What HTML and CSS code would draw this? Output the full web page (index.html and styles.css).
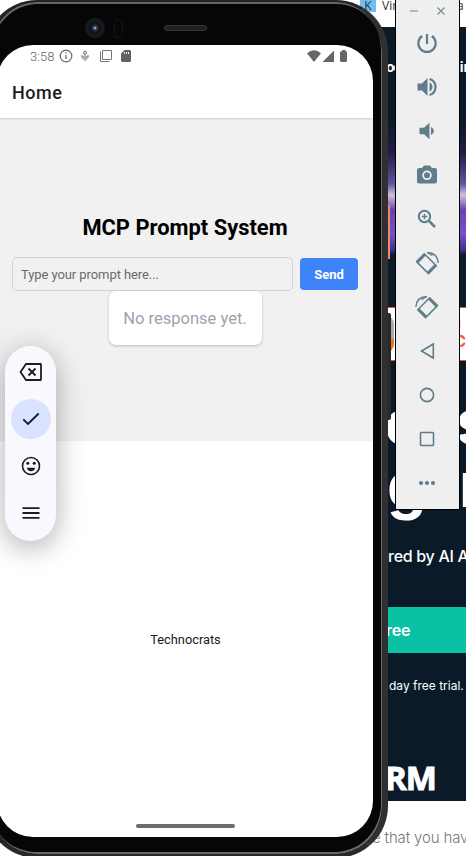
FILE: index.html
```html
<!DOCTYPE html>
<html lang="en">
<head>
<meta charset="utf-8">
<title>MCP Prompt System</title>
<link rel="stylesheet" href="styles.css">
</head>
<body>
<main class="desktop">
  <section class="site">
    <div class="tabs"><span class="favicon">K</span><span>Vir</span><span class="tab-end">a</span></div>
    <div class="nav"><b>oc</b><b>in</b></div>
    <div class="art"><i></i></div>
    <div class="banner"><span class="avatar"></span><span class="banner-text"><small>H</small><b>C</b></span></div>
    <div class="headline"><div><span>o</span><span>s</span></div><div><span>g</span><span>r</span></div></div>
    <p class="powered">ered by AI Agents</p>
    <div class="cta">Free</div>
    <p class="trial">day free trial. <span>N</span></p>
    <div class="brand">RM</div>
    <p class="foot">e that you have</p>
  </section>

  <div class="side-key"></div>
  <section class="phone">
    <div class="bezel"><span class="camera"></span><span class="sensor"></span><span class="speaker"></span></div>
    <div class="screen">
      <div class="status">
        <span class="time">3:58</span>
        <svg class="s-info" width="14" height="14" viewBox="0 0 14 14" fill="none" stroke="#666"><circle cx="7" cy="7" r="5.8" stroke-width="1.2"/><path d="M7 6v4M7 3.5v1.3" stroke-width="1.3"/></svg>
        <svg class="s-pin" width="10" height="12" viewBox="0 0 10 12" fill="none" stroke="#666"><circle cx="5" cy="2.800" r="1.500"/><path d="M5 4.500v3M2 5.500l3 3 3-3M2 5.500v2l3 3 3-3v-2" stroke-width="1"/></svg>
        <svg class="s-copy" width="13" height="13" viewBox="0 0 13 13" fill="none" stroke="#777"><path d="M3.500 1.500h9v9h-9zM1.500 2.500v10h9"/></svg>
        <svg class="s-sd" width="10" height="12" viewBox="0 0 10 12"><path d="M3.5 0H9l1 1v10l-1 1H1l-1-1V3.5z" fill="#616161"/><path d="M3.5 2v2M5.5 2v2M7.5 2v2" stroke="#fff" stroke-width=".9"/></svg>
        <svg class="s-net" width="42" height="12" viewBox="0 0 42 12" fill="#666"><path d="M0 3.2Q7-2.6 14 3.2L7 12zM15.5 12 27 .5V12z"/><path d="M33 1.500h2V0h3.500v1.500H40V11l-1 1h-5l-1-1z"/></svg>
      </div>
      <header class="appbar">Home</header>
      <section class="prompt">
        <h1>MCP Prompt System</h1>
        <div class="form"><div class="field">Type your prompt here...</div><button>Send</button></div>
        <div class="response">No response yet.</div>
      </section>
      <footer class="credit">Technocrats</footer>
      <div class="home-bar"></div>
    </div>
  </section>

  <nav class="keys">
    <span><svg width="24" height="20" viewBox="0 0 24 20" fill="none" stroke="currentColor" stroke-width="1.800" stroke-linejoin="round"><path d="M7 2h14.500q.5 0 .5.500v15q0 .5-.5.500H7L1.500 10z"/><path d="m9.500 6.500 7 7m0-7-7 7"/></svg></span>
    <span class="active"><svg width="18" height="14" viewBox="0 0 18 14" fill="none" stroke="currentColor" stroke-width="1.800"><path d="m1.300 7.300 4.700 4.700L16.700 1.500"/></svg></span>
    <span><svg width="20" height="20" viewBox="0 0 20 20" fill="currentColor"><circle cx="10" cy="10" r="8.500" fill="none" stroke="currentColor" stroke-width="1.600"/><circle cx="6.800" cy="7.300" r="1.500"/><circle cx="13.200" cy="7.300" r="1.500"/><path d="M5.800 11.800h8.400a4.300 4.300 0 0 1-8.400 0z"/></svg></span>
    <span><svg width="18" height="12" viewBox="0 0 18 12" stroke="currentColor" stroke-width="1.800"><path d="M.5 1.200h17M.5 6h17M.5 10.800h17"/></svg></span>
  </nav>

  <aside class="tools">
    <div class="window"><svg width="8" height="8" viewBox="0 0 8 8"><path d="M0 4h8" stroke="#9aabb4" stroke-width="1.600"/></svg><svg width="8" height="8" viewBox="0 0 8 8"><path d="m.5.500 7 7m0-7-7 7" stroke="#78909c" stroke-width="1.300"/></svg></div>
    <span><svg viewBox="0 0 24 24" fill="none" stroke="currentColor" stroke-width="2.200"><path d="M12 3v10M7.200 5a8.700 8.700 0 1 0 9.600 0"/></svg></span>
    <span><svg viewBox="0 0 24 24" fill="currentColor"><path d="M2.500 8.500v7H7l5.500 5.500V3L7 8.500zM14.500 7.500v9q3-1.300 3-4.500t-3-4.500z"/><path d="M14.500 4q6 1.700 6 8t-6 8" fill="none" stroke="currentColor" stroke-width="2.200"/></svg></span>
    <span><svg viewBox="0 0 24 24" fill="currentColor"><path d="M4.500 8.800v6.400H9l5.500 5V3.800l-5.500 5zM16 8v8q3-1.300 3-4t-3-4z"/></svg></span>
    <span><svg viewBox="0 0 24 24" fill="currentColor" fill-rule="evenodd"><path d="m9 2.500-2 2.500H4q-2 0-2 2v11.500q0 2 2 2h16q2 0 2-2V7q0-2-2-2h-3l-2-2.500zM12 7.500a4.800 4.800 0 1 1 0 9.600 4.800 4.800 0 0 1 0-9.600z"/><circle cx="12" cy="12.300" r="3"/></svg></span>
    <span><svg viewBox="0 0 24 24" fill="none" stroke="currentColor" stroke-width="2"><circle cx="9.500" cy="9.500" r="5.700"/><path d="M9.500 6.700v5.600M6.700 9.500h5.600" stroke-width="1.500"/><path d="m14 14 6 6" stroke-width="2.500"/></svg></span>
    <span><svg viewBox="0 0 24 24" fill="none" stroke="currentColor" stroke-width="1.500" stroke-linejoin="round"><path d="m9.300 2.800 12 12-7.800 7.800-12-12z"/><path d="m2.300 11.300 7.700-7.700M12.800 21.800l7.700-7.700" stroke-width="2.600"/><path d="M12 1.700q10-.5 11.200 10.100" stroke-width="1.400"/><path d="m13 1.700 4.500 3" stroke-width="1.300"/></svg></span>
    <span><svg class="flip" viewBox="0 0 24 24" fill="none" stroke="currentColor" stroke-width="1.500" stroke-linejoin="round"><path d="m9.300 2.800 12 12-7.800 7.800-12-12z"/><path d="m2.300 11.300 7.700-7.700M12.800 21.800l7.700-7.700" stroke-width="2.600"/><path d="M12 1.700q10-.5 11.200 10.100" stroke-width="1.400"/><path d="m13 1.700 4.500 3" stroke-width="1.300"/></svg></span>
    <span><svg viewBox="0 0 24 24" fill="none" stroke="currentColor" stroke-width="1.600"><path d="M18.300 5v14L6.500 12z"/></svg></span>
    <span><svg viewBox="0 0 24 24" fill="none" stroke="currentColor" stroke-width="1.600"><circle cx="12" cy="12" r="6.600"/></svg></span>
    <span><svg viewBox="0 0 24 24" fill="none" stroke="currentColor" stroke-width="1.600"><rect x="5.500" y="5.500" width="13" height="13" rx=".8"/></svg></span>
    <span><svg viewBox="0 0 24 24" fill="currentColor"><circle cx="6" cy="12" r="2.100"/><circle cx="12" cy="12" r="2.100"/><circle cx="18" cy="12" r="2.100"/></svg></span>
  </aside>
</main>
</body>
</html>
```
FILE: styles.css
```css
* { box-sizing: border-box; }
body { margin: 0; overflow: hidden; font-family: Roboto, sans-serif; }
h1, p { margin: 0; }
svg { display: block; flex: none; }
.desktop { position: relative; width: 466px; height: 856px; overflow: hidden; background: #fff; }

/* Browser window behind the phone */
.site { position: absolute; inset: 0; padding-left: 360px; background: #fff; font-family: Inter, sans-serif; color: #fff; white-space: nowrap; }
.tabs { display: flex; height: 27px; padding: 0; color: #303030; font: 12px/12px "Open Sans", sans-serif; }
.favicon { width: 16px; height: 12px; margin-right: 6px; background: #70bff1; text-align: center; }
.tab-end { margin-left: 60px; }
.nav { display: flex; height: 91px; gap: 57px; padding: 30px 0 0 26px; background: #0a1a28; font-size: 14px; line-height: 20px; }
.nav b:first-child { letter-spacing: -1px; margin-right: 2px; }
.art { height: 190px; padding: 87px 0 0 28px; background: linear-gradient(#0a1a28, #201d47 35px, #61559e 66px, #d1c1d9 77px, #6941ad 92px, #7950ca 116px, #402f8d 132px, #0b1b2c 137px); }
.art i { display: block; width: 2px; height: 54px; background: #f1886e; }
.banner { display: flex; align-items: center; gap: 60px; height: 54px; margin-top: -1px; padding-left: 18px; background: #fff; border: solid #ed5051; border-width: 1px 0; }
.avatar { width: 20px; height: 36px; border-radius: 10px; background: linear-gradient(#aaa 65%, #e77819 65%); }
.banner-text small, .banner-text b { display: block; font-size: 9px; line-height: 14px; color: #ed5789; }
.banner-text b { font-size: 16px; line-height: 21px; color: #f15a43; }
.headline { height: 173px; padding-top: 29px; background: #0a1a28; font-size: 62px; line-height: 63px; font-weight: 700; }
.headline div { display: grid; grid-template-columns: 72px 60px; padding-left: 24px; }
.headline div:last-child { padding-left: 27px; }
.powered { height: 73px; padding: 10px 0 0 19px; background: #0a1a28; font-size: 16px; line-height: 24px; font-weight: 500; letter-spacing: -.3px; }
.cta { height: 46px; padding-left: 17px; background: #0bc1a4; font-size: 16px; line-height: 46px; font-weight: 600; letter-spacing: -.2px; }
.trial { height: 92px; padding: 22px 0 0 29px; background: #0a1a28; font-size: 12px; line-height: 22px; }
.trial span { color: #3232bd; }
.brand { height: 56px; padding-left: 25px; background: #0a1a28; font: 700 33px/66px "Open Sans", sans-serif; letter-spacing: -1px; -webkit-text-stroke: 1px #fff; }
.foot { padding: 24px 0 0 12px; color: #777; font-size: 15px; line-height: 25px; font-weight: 300; letter-spacing: -.15px; }

/* Device */
.side-key { position: absolute; left: 380px; top: 313px; width: 11px; height: 107px; border-radius: 2px; background: #292929; }
.phone { position: absolute; left: -15px; top: 0; width: 403px; height: 858px; padding: 0 10px 0 9px; border: solid #242424; border-width: 2px 6px 4px 5px; border-right-color: #303032; border-bottom-color: #292929; border-radius: 52px; background: #060608; box-shadow: inset -1px -2px 0 #6a6a6a, inset 1px 2px 0 #666; }
.bezel { display: flex; align-items: center; height: 43px; padding: 9px 0 0 86px; }
.camera { width: 20px; height: 20px; border-radius: 50%; background: radial-gradient(circle, #8698b3 0 1px, #27334a 2px, #0b0d12 5px, #191a1c 7px, #171719); }
.sensor { width: 9px; height: 19px; margin-left: 9px; border: 1px solid #171717; border-radius: 5px; }
.speaker { width: 43px; height: 6px; margin-left: 41px; border: 1px solid #343434; border-radius: 3px; background: #202020; }
.screen { display: flex; flex-direction: column; width: 376px; height: 792px; margin-left: -2px; padding-left: 1px; border-radius: 36px; background: #fff; overflow: hidden; }
.status { display: flex; align-items: center; flex: none; height: 23px; padding: 0 24px 0 32px; color: #666; }
.time { width: 29px; font-size: 13px; line-height: 22px; font-weight: 300; }
.s-info, .s-pin, .s-copy, .s-sd, .s-net { position: relative; top: -1px; }
.s-pin { margin-left: 7px; }
.s-copy { margin-left: 9px; }
.s-sd { margin-left: 9px; }
.s-net { margin-left: auto; }
.appbar { position: relative; flex: none; height: 50px; padding-left: 14px; color: #1c1c1e; font-size: 18px; line-height: 50px; font-weight: 500; letter-spacing: .5px; box-shadow: 0 2px 2px -1px #ccc; }
.prompt { display: flex; flex: none; flex-direction: column; align-items: center; height: 323px; padding: 94px 15px 0 14px; background: #f1f1f1; }
h1 { height: 45px; color: #000; font-size: 21.900px; line-height: 32px; font-weight: 700; white-space: nowrap; }
.form { display: flex; align-self: stretch; align-items: center; gap: 7px; }
.field { flex: 1; height: 34px; padding-left: 8px; border: 1px solid #d0d4da; border-radius: 5px; color: #6a6a6a; font-size: 13px; line-height: 33px; letter-spacing: -.08px; }
button { width: 58px; height: 32px; padding: 0; border: 0; border-radius: 4px; background: #3e83f7; color: #fff; font: 700 13px/33px Roboto, sans-serif; }
.response { width: 153px; height: 54px; border-radius: 7px; background: #fff; box-shadow: 0 1px 3px #bbb; color: #9ca3af; font-size: 16.500px; line-height: 55px; text-align: center; white-space: nowrap; }
.credit { display: grid; flex: 1; place-items: center; padding-top: 14px; color: #191919; font-size: 12.800px; }
.home-bar { flex: none; width: 99px; height: 4px; margin: 0 auto 9px; border-radius: 2px; background: #6c6c6c; }

/* Floating keyboard controls */
.keys { position: absolute; left: 5px; top: 346px; display: flex; flex-direction: column; align-items: center; gap: 7px; width: 51px; height: 195px; padding-top: 6px; border-radius: 26px; background: #f9f8ff; color: #1b1b21; box-shadow: 0 8px 24px #0003, 0 3px 38px #0002; }
.keys span { display: grid; flex: none; place-items: center; width: 40px; height: 40px; border-radius: 50%; }
.keys .active { background: #d9e2ff; color: #0b1a3b; }

/* Emulator toolbar */
.tools { position: absolute; left: 395px; top: -1px; width: 65px; height: 511px; border: 1px solid #000; background: #efefef; color: #607d8b; }
.window { display: flex; height: 21px; align-items: center; justify-content: space-between; padding: 0 14px; }
.tools > span { display: grid; height: 44px; padding-right: 2px; place-items: center; }
.tools > span svg { width: 24px; height: 24px; }
.tools .flip { transform: scaleX(-1); }
```
